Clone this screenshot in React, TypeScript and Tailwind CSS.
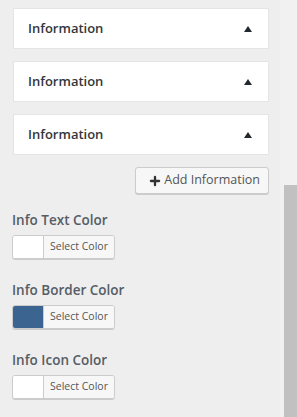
import { Plus } from 'lucide-react';

const sections = ['Information', 'Information', 'Information'];

const colorFields = [
  { label: 'Info Text Color', color: '#ffffff' },
  { label: 'Info Border Color', color: '#3c6491' },
  { label: 'Info Icon Color', color: '#ffffff' },
];

const ColorPicker = ({ color }: { color: string }) => (
  <div className="flex h-[24px] w-[103px] overflow-hidden rounded-[3px] border border-[#cccccc] shadow-[0_1px_0_#cccccc]">
    <div className="w-[31px] border-r border-[#cccccc]" style={{ backgroundColor: color }} />
    <div className="flex flex-1 items-center justify-center bg-[#f7f7f7] text-[10.5px] text-[#555555]">
      Select Color
    </div>
  </div>
);

export default function App() {
  return (
    <div className="flex h-[417px] w-[297px] overflow-hidden bg-[#eeeeee] font-['Open_Sans','Noto_Sans',sans-serif]">
      <div className="flex w-[280px] flex-col pl-[13px] pr-[11px] pt-[8px]">
        {/* Collapsed sections */}
        <div className="flex flex-col gap-[12px]">
          {sections.map((title, i) => (
            <div
              key={i}
              className="flex h-[41px] items-center justify-between border border-[#e5e5e5] bg-white pl-[14px] pr-[16px]"
            >
              <span className="mt-[1px] text-[13px] font-semibold text-[#32373c]">{title}</span>
              <svg width="8" height="6" viewBox="0 0 8 6" className="mt-[1px]">
                <path d="M4 0 L8 6 L0 6 Z" fill="#23282d" />
              </svg>
            </div>
          ))}
        </div>

        <div className="mt-[12px] flex justify-end">
          <button className="flex h-[27px] items-center gap-[2px] rounded-[3px] border border-[#cccccc] bg-[#f7f7f7] pl-[12px] pr-[8px] text-[12.5px] text-[#555555] shadow-[0_1px_0_#cccccc]">
            <Plus className="h-[14px] w-[14px] text-[#333333]" strokeWidth={4} />
            Add Information
          </button>
        </div>

        {/* Colour settings */}
        <div className="mt-[17px] flex flex-col gap-[22px]">
          {colorFields.map((f) => (
            <div key={f.label} className="-ml-[1px] flex flex-col gap-[5px]">
              <span className="text-[13.5px] font-semibold leading-[19px] text-[#555d66]">{f.label}</span>
              <ColorPicker color={f.color} />
            </div>
          ))}
        </div>
      </div>

      {/* Scrollbar */}
      <div className="flex flex-1 flex-col bg-[#f1f1f1] pl-[4px] pt-[185px]">
        <div className="flex-1 bg-[#c1c1c1]" />
      </div>
    </div>
  );
}
